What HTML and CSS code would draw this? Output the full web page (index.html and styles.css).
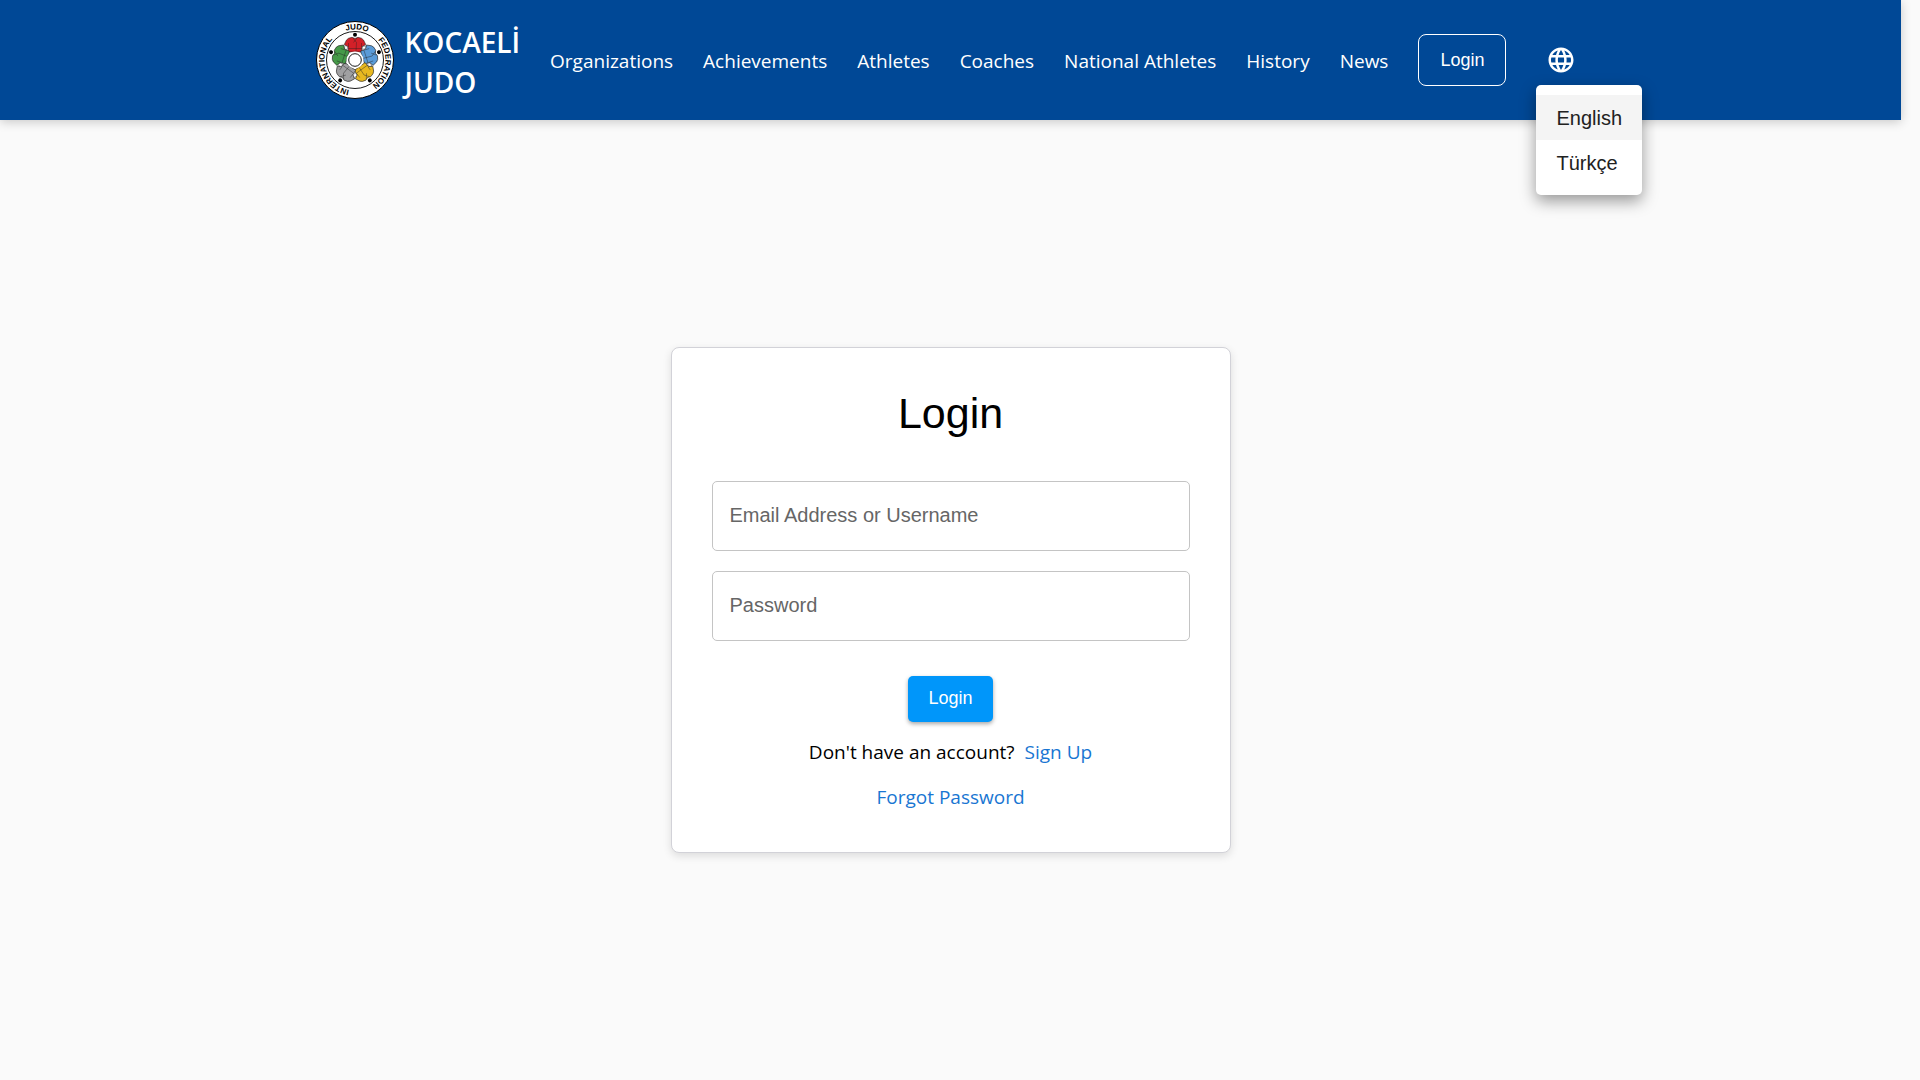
FILE: index.html
```html
<!DOCTYPE html>
<html lang="en">
<head>
<meta charset="utf-8">
<meta name="viewport" content="width=device-width, initial-scale=1">
<title>Kocaeli Judo - Login</title>
<link rel="stylesheet" href="styles.css">
</head>
<body>
<header class="header">
  <a class="brand" href="#">
    <svg class="brand-logo" viewBox="0 0 80 80" role="img" aria-label="International Judo Federation">
      <defs>
        <path id="ring" d="M40 70.500A30.500 30.500 0 0 1 40 9.500A30.500 30.500 0 0 1 40 70.500"/>
        <g id="judoka">
          <path d="M37 17.300L33.500 18.300L31.500 20L29.300 24.500L33 26.800L33.400 32H46.600L47 26.800L50.700 24.500L48.500 20L46.500 18.300L43 17.300L40 18.500Z" stroke="#222" stroke-width=".6"/>
          <path d="M38 18L41.500 22.500L41 31.500M42 18L38.500 22.500M33.300 28.500H46.700M33.500 23V27M46.500 23V27" fill="none" stroke="#222" stroke-width=".4"/>
          <circle cx="40" cy="14.800" r="2" fill="#000"/>
          <path d="M30 25.200l2.600 1.600-.6 3.200-2.600-1.400z" fill="#fff" stroke="#222" stroke-width=".4"/>
        </g>
      </defs>
      <circle cx="40" cy="40" r="38.500" fill="#fff" stroke="#000"/>
      <circle cx="40" cy="40" r="28.500" fill="#fff" stroke="#000" stroke-width=".9"/>
      <use href="#judoka" fill="#d32028"/>
      <use href="#judoka" fill="#5a9bd8" transform="rotate(72 40 40)"/>
      <use href="#judoka" fill="#e8b820" transform="rotate(144 40 40)"/>
      <use href="#judoka" fill="#a0a0a2" transform="rotate(216 40 40)"/>
      <use href="#judoka" fill="#459a48" transform="rotate(288 40 40)"/>
      <circle cx="40" cy="40" r="8.500" fill="#fff"/>
      <circle cx="40" cy="40" r="6.300" fill="#fff" stroke="#000" stroke-width=".9"/>
      <g class="ring-text">
        <text><textPath href="#ring" startOffset="20%">INTERNATIONAL</textPath></text>
        <text><textPath href="#ring" startOffset="51%">JUDO</textPath></text>
        <text><textPath href="#ring" startOffset="77%">FEDERATION</textPath></text>
      </g>
    </svg>
    <span class="brand-name">KOCAELİ<br>JUDO</span>
  </a>
  <nav class="nav">
    <a href="#">Organizations</a>
    <a href="#">Achievements</a>
    <a href="#">Athletes</a>
    <a href="#">Coaches</a>
    <a href="#">National Athletes</a>
    <a href="#">History</a>
    <a href="#">News</a>
  </nav>
  <button class="button button-outlined" type="button">Login</button>
  <div class="language">
    <button class="language-toggle" type="button" aria-label="Language" aria-haspopup="menu" aria-expanded="true">
      <svg viewBox="0 0 24 24" fill="currentColor" aria-hidden="true"><path d="M11.990 2C6.470 2 2 6.480 2 12s4.470 10 9.990 10C17.520 22 22 17.520 22 12S17.520 2 11.990 2zm6.930 6h-2.950c-.32-1.250-.78-2.450-1.380-3.560 1.840.63 3.370 1.910 4.330 3.560zM12 4.040c.83 1.200 1.480 2.530 1.910 3.960h-3.820c.43-1.430 1.080-2.760 1.910-3.960zM4.260 14C4.100 13.360 4 12.690 4 12s.1-1.360.26-2h3.380c-.08.66-.14 1.320-.14 2s.06 1.340.14 2H4.260zm.82 2h2.950c.32 1.250.78 2.450 1.380 3.560-1.840-.63-3.370-1.900-4.330-3.560zm2.950-8H5.080c.96-1.660 2.490-2.930 4.330-3.560C8.810 5.550 8.350 6.750 8.030 8zM12 19.960c-.83-1.200-1.480-2.530-1.910-3.960h3.820c-.43 1.430-1.080 2.760-1.910 3.960zM14.340 14H9.660c-.09-.66-.16-1.320-.16-2s.07-1.350.16-2h4.680c.09.65.16 1.320.16 2s-.07 1.340-.16 2zm.25 5.560c.6-1.110 1.060-2.310 1.380-3.560h2.950c-.96 1.650-2.490 2.930-4.330 3.560zM16.360 14c.08-.66.14-1.320.14-2s-.06-1.340-.14-2h3.380c.16.64.26 1.310.26 2s-.1 1.360-.26 2h-3.380z"/></svg>
    </button>
    <div class="menu" role="menu">
      <button class="menu-item menu-item-active" type="button" role="menuitem">English</button>
      <button class="menu-item" type="button" role="menuitem" lang="tr">Türkçe</button>
    </div>
  </div>
</header>
<main class="main">
  <form class="card">
    <h1 class="title">Login</h1>
    <div class="field">
      <input id="user" type="text" placeholder=" ">
      <label for="user">Email Address or Username</label>
    </div>
    <div class="field">
      <input id="password" type="password" placeholder=" ">
      <label for="password">Password</label>
    </div>
    <button class="button button-primary" type="submit">Login</button>
    <p class="hint"><span>Don't have an account?</span><a href="#">Sign Up</a></p>
    <p class="hint"><a href="#">Forgot Password</a></p>
  </form>
</main>
</body>
</html>
```
FILE: styles.css
```css
* {
  box-sizing: border-box;
}

body {
  display: flex;
  flex-direction: column;
  min-height: 100vh;
  margin: 0;
  padding-right: 19px;
  background: #fafafa;
  color: #000;
  font: 19px/30px "Segoe UI", "Open Sans", "Noto Sans", sans-serif;
}

a {
  color: #1976d2;
  text-decoration: none;
}

.header {
  display: flex;
  align-items: center;
  justify-content: center;
  gap: 30px;
  padding: 20px 0;
  background: #004896;
  box-shadow: 0 2px 10px rgba(0, 0, 0, 0.2);
}

.brand {
  display: flex;
  align-items: center;
  gap: 10px;
  color: #fff;
}

.brand-logo {
  width: 80px;
  height: 80px;
}

.ring-text {
  font: bold 8px "Liberation Sans", Arial, sans-serif;
  text-anchor: middle;
}

.brand-name {
  padding-top: 2px;
  font-size: 28px;
  font-weight: 600;
  line-height: 40px;
  margin-bottom: -2px;
}

.nav {
  display: flex;
  gap: 30px;
  padding-top: 2px;
}

.nav a {
  color: #fff;
  white-space: nowrap;
}

.button {
  border: 0;
  border-radius: 5px;
  padding: 8px 20px 10px;
  color: #fff;
  font: 18px/28px "Liberation Sans", Arial, sans-serif;
  cursor: pointer;
}

.button-outlined {
  border: 1px solid #fff;
  border-radius: 8px;
  padding: 11px 21px;
  background: transparent;
}

.button-primary {
  align-self: center;
  margin-top: 15px;
  background: #0096fa;
  box-shadow: 0 2px 4px rgba(0, 0, 0, 0.35);
}

.language {
  position: relative;
}

.language-toggle {
  display: flex;
  border: 0;
  padding: 10px;
  background: transparent;
  color: #fff;
  cursor: pointer;
}

.language-toggle svg {
  width: 30px;
  height: 30px;
}

.menu {
  position: absolute;
  top: 100%;
  left: 0;
  padding: 10px 0;
  border-radius: 5px;
  background: #fff;
  box-shadow: 0 6px 16px rgba(0, 0, 0, 0.4);
}

.menu-item {
  display: block;
  width: 100%;
  border: 0;
  padding: 8px 20px 7px;
  background: transparent;
  color: #212121;
  font: 20px/30px "Liberation Sans", Arial, sans-serif;
  text-align: left;
  cursor: pointer;
}

.menu-item-active {
  background: #f4f4f4;
}

.main {
  display: flex;
  flex: 1;
  align-items: center;
  justify-content: center;
}

.card {
  display: flex;
  flex-direction: column;
  gap: 20px;
  width: 100%;
  max-width: 560px;
  padding: 40px;
  border: 1px solid #d2d2d8;
  border-radius: 8px;
  background: #fff;
  box-shadow: 0 3px 8px rgba(0, 0, 0, 0.12);
}

.title {
  margin: 0 0 23px;
  font: 43px/50px "Liberation Sans", Arial, sans-serif;
  text-align: center;
}

.field {
  position: relative;
  font: 20px/30px "Liberation Sans", Arial, sans-serif;
}

.field input {
  display: block;
  width: 100%;
  height: 70px;
  border: 1px solid #c4c4c4;
  border-radius: 5px;
  padding: 0 17px;
  background: transparent;
  font: inherit;
}

.field label {
  position: absolute;
  top: 19px;
  left: 18px;
  color: #666;
  pointer-events: none;
}

.field input:not(:placeholder-shown) + label {
  display: none;
}

.hint {
  display: flex;
  justify-content: center;
  gap: 10px;
  margin: -5px 0 0;
}
```
